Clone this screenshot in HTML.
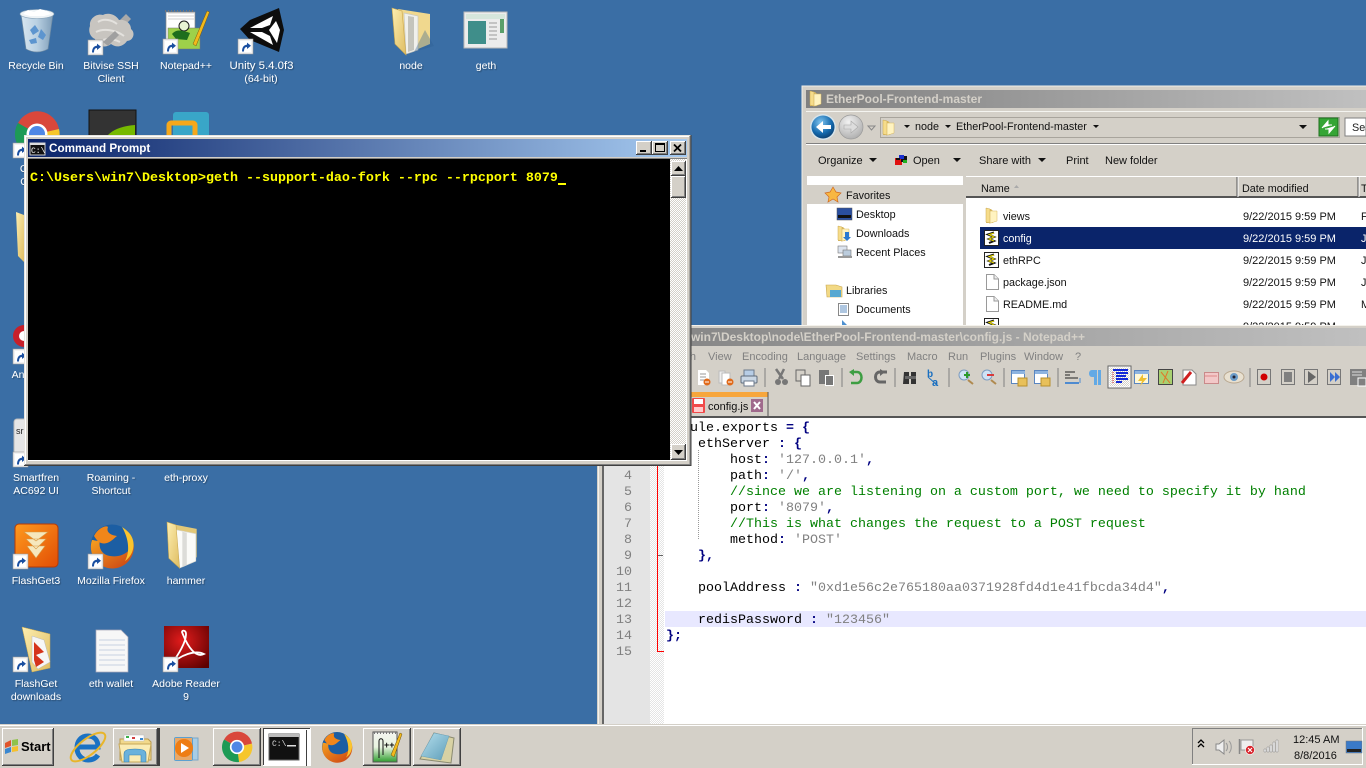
<!DOCTYPE html>
<html><head><meta charset="utf-8"><title>Desktop</title>
<style>
html,body{margin:0;padding:0;background:#3a6ea5;width:1366px;height:768px;overflow:hidden}
svg{display:block;position:absolute;left:0;top:0}
text{font-family:"Liberation Sans",sans-serif;font-size:10.8px;white-space:pre}
.d{fill:#fff;text-anchor:middle;font-size:10.5px;filter:url(#ts)}
.b{font-weight:bold;font-size:12px}
.t{font-size:11px}
.m{font-family:"Liberation Mono",monospace;font-size:13.33px;fill:#000}
.s{fill:#808080}.c{fill:#008000}.o{fill:#000080;font-weight:bold}
.n{font-family:"Liberation Mono",monospace;font-size:13.33px;fill:#808080;text-anchor:end}
.g{fill:#808080;font-size:11px}
</style></head><body>
<svg width="1366" height="768" viewBox="0 0 1366 768" xmlns="http://www.w3.org/2000/svg">
<defs>
<filter id="ts" x="-10%" y="-30%" width="120%" height="170%"><feDropShadow dx="1" dy="1" stdDeviation="0.4" flood-color="#000" flood-opacity=".35"/></filter>
<linearGradient id="act" x1="0" x2="1"><stop offset="0" stop-color="#0a246a"/><stop offset="1" stop-color="#a6caf0"/></linearGradient>
<linearGradient id="ina" x1="0" x2="1"><stop offset="0" stop-color="#808080"/><stop offset="1" stop-color="#c0c0c0"/></linearGradient>
<linearGradient id="fy" x1="0" x2="1" y1="0" y2="1"><stop offset="0" stop-color="#fdeeb0"/><stop offset="1" stop-color="#dfbd62"/></linearGradient>
<linearGradient id="bin" x1="0" x2="1"><stop offset="0" stop-color="#d8e6f0"/><stop offset=".5" stop-color="#b9d0e2"/><stop offset="1" stop-color="#7e9db8"/></linearGradient>
<linearGradient id="fg" x1="0" x2="1" y1="0" y2="1"><stop offset="0" stop-color="#ff9a1e"/><stop offset="1" stop-color="#e14d05"/></linearGradient>
<radialGradient id="ad" cx=".4" cy=".35" r=".8"><stop offset="0" stop-color="#e21c1c"/><stop offset="1" stop-color="#5c0000"/></radialGradient>
<radialGradient id="ba" cx=".4" cy=".3" r=".8"><stop offset="0" stop-color="#7ec4ef"/><stop offset=".6" stop-color="#1469ad"/><stop offset="1" stop-color="#0a3560"/></radialGradient>
<radialGradient id="fw" cx=".4" cy=".3" r=".8"><stop offset="0" stop-color="#f2f2f2"/><stop offset="1" stop-color="#a8a8a8"/></radialGradient>
<linearGradient id="ff" x1="0" x2="1" y1="0" y2="1"><stop offset="0" stop-color="#f5a01f"/><stop offset="1" stop-color="#c93f14"/></linearGradient>
<linearGradient id="gn" x1="0" x2="0" y1="0" y2="1"><stop offset="0" stop-color="#f4f4f0"/><stop offset=".5" stop-color="#e9f4e0"/><stop offset="1" stop-color="#2f9d2f"/></linearGradient>
<linearGradient id="nb" x1="0" x2="1" y1="0" y2="1"><stop offset="0" stop-color="#b7e0ee"/><stop offset="1" stop-color="#5d9db8"/></linearGradient>
<pattern id="chk" width="2" height="2" patternUnits="userSpaceOnUse"><rect width="2" height="2" fill="#e4e4e4"/><rect width="1" height="1" fill="#fff"/><rect x="1" y="1" width="1" height="1" fill="#fff"/></pattern>
<pattern id="chk2" width="2" height="2" patternUnits="userSpaceOnUse"><rect width="2" height="2" fill="#d4d0c8"/><rect width="1" height="1" fill="#fff"/><rect x="1" y="1" width="1" height="1" fill="#fff"/></pattern>

<g id="sc"><rect width="15" height="15" fill="#f2f2f2" stroke="#9a9a9a" stroke-width=".6"/><rect x="2" y="2" width="11" height="11" fill="#fff"/><path d="M4 12.5C4 8 6 6 9 5.6V3.6L13 6.8L9 10V8C7 8 6 9.5 6 12.5Z" fill="#1a4fa0"/></g>
<g id="folder"><path d="M6 1L38 6V36L14 46Z" fill="#f0d88e"/><path d="M12 5L26 8V42L14 46Z" fill="#f0f0ec" stroke="#c8c8c0" stroke-width=".7"/><path d="M16 8L22 9V42L16 44Z" fill="#c4c4bc"/><path d="M0 0L10 3L14 47L3 36Z" fill="url(#fy)" stroke="#c9a74f" stroke-width=".6"/></g>
<g id="folder2"><path d="M5 2L33 7V36L15 44Z" fill="#e2c878"/><path d="M10 8L32 12V40L14 47Z" fill="#fbfbf8" stroke="#d8d8d0" stroke-width=".7"/><path d="M17 10L22 11V44L17 46Z" fill="#dcdcd8"/><path d="M0 0L10 3L14 47L2 37Z" fill="url(#fy)" stroke="#c9a74f" stroke-width=".6"/></g>
<g id="fs"><path d="M1 1H6L8 3V15H1Z" fill="#d9bb66"/><path d="M4 3H12V13L6 15H4Z" fill="#fff3c0" stroke="#d8b85e" stroke-width=".5"/><path d="M1 0L5 1V15L1 14Z" fill="#f6dc8a" stroke="#c9a74f" stroke-width=".5"/></g>
<g id="chrome"><path d="M0 0L-19 -11A22 22 0 0 1 22 -5Z" fill="#d9473b"/><path d="M0 0L22 -5A22 22 0 0 1 3 22Z" fill="#f6c62b"/><path d="M0 0L3 22A22 22 0 0 1 -19 -11Z" fill="#1d9a55"/><circle r="10.500" fill="#fff"/><circle r="8" fill="#4f87e5"/></g>
<g id="fox"><circle r="21.500" fill="#1c5ea3"/><path d="M-20 -6A21.500 21.500 0 1 0 21 -5C20 6 9 12 -2 10C-10 9 -14 2 -12 -6C-14 -4 -17 -6 -20 -6Z" fill="url(#ff)"/><path d="M-18 -10C-14 -18 -6 -21 -4 -19C-6 -14 -2 -11 5 -10C0 -6 -4 -1 -11 -3C-14 -4 -16 -7 -18 -10Z" fill="#f1861a"/><path d="M10 -19C18 -14 22 -8 21.500 0C21 8 16 13 13 15C18 6 17 -7 10 -19Z" fill="#fbc42d"/></g>
<g id="script"><rect x=".5" y=".5" width="14" height="15" fill="#fff" stroke="#222"/><path d="M10 2.500L4 4.500L10 7L5 9L10 11L5 13" fill="none" stroke="#111" stroke-width="2"/><path d="M10 3L5 4.500L10 7L5 9L10 11" fill="none" stroke="#e8d800" stroke-width="1"/></g>
<g id="doc"><path d="M1.500 .5H9L13.500 5V15.500H1.500Z" fill="#fff" stroke="#9a9a9a"/><path d="M9 .5V5H13.500" fill="#eee" stroke="#9a9a9a"/></g>
</defs>

<!-- desktop -->
<rect width="1366" height="768" fill="#3a6ea5"/>

<!-- recycle -->
<path d="M21 14L53 14L48 49Q37 55 26 49Z" fill="url(#bin)" stroke="#6d8aa3" stroke-width=".7"/>
<ellipse cx="37" cy="14" rx="17" ry="4.500" fill="#eef3f6" stroke="#8aa3b8" stroke-width=".6"/>
<path d="M23 14L28 10L34 12L40 9L47 11L51 14L44 16L30 16Z" fill="#fff"/>
<path d="M30 30L35 25L39 31L33 35ZM41 29L46 35L43 40L38 37ZM29 40L36 38L37 43L31 44Z" fill="#5d95cf"/>
<!-- bitvise -->
<path d="M118 22L126 14L131 19L123 27Z" fill="#a9a9a9"/>
<path d="M90 26C89 19 96 13 103 15C109 12 116 15 119 20C125 19 131 23 131 29C136 33 133 41 127 41C123 47 116 48 111 44C105 49 96 46 95 39C90 37 88 31 90 26Z" fill="#c8c5c0"/>
<path d="M98 22C104 18 112 20 117 24M96 32C104 28 116 30 124 36M103 40C109 38 116 40 120 42" stroke="#e4e2de" stroke-width="2" fill="none"/>
<path d="M103 42L115 31L119 35L108 46Z" fill="#a0a0a0"/>
<use href="#sc" x="88" y="40"/>
<!-- notepad++ -->
<rect x="166" y="12" width="29" height="36" fill="#fff" stroke="#888" stroke-width=".7"/>
<path d="M168 13H194M168 16H194M168 19H194" stroke="#d0d0d0"/>
<rect x="168" y="28" width="32" height="21" fill="#9ed14a" stroke="#777" stroke-width=".5"/>
<circle cx="184" cy="26" r="5" fill="#e8f3d4" stroke="#1d1d1d"/><path d="M172 34C177 28 184 31 190 33L187 40L176 39Z" fill="#1d6e1d"/>
<path d="M165 11H195" stroke="#777" stroke-width="2" stroke-dasharray="1 2"/>
<path d="M193 44L207 11L209.500 12L196 46Z" fill="#f2b91b" stroke="#7a5a10" stroke-width=".5"/>
<use href="#sc" x="163" y="39"/>
<!-- unity -->
<path d="M240 29L250 20L279 8L284 30L279 52L250 40Z" fill="#0d0d0d"/>
<path d="M250 28L273 16L270 25L262 28ZM276 21L280 30L277 43L269 30ZM250 32L262 32L270 36L273 45Z" fill="#fff"/>
<use href="#sc" x="238" y="39"/>
<!-- node geth -->
<use href="#folder" transform="translate(392,8)"/>
<path d="M425 30L434 46L414 52Z" fill="#2e5e92" opacity=".35"/>
<rect x="464" y="12" width="43" height="36" fill="#ececec" stroke="#b8b8b8"/><rect x="466" y="14" width="39" height="5" fill="#d6e6dc"/><rect x="468" y="21" width="18" height="23" fill="#3f8e8a"/><path d="M489 23H497M489 27H497M489 31H497M489 35H497M489 39H497" stroke="#9a9a9a"/><rect x="500" y="19" width="4" height="14" fill="#5a9f6a"/>
<text class="d" x="36" y="69">Recycle Bin</text>
<text class="d" x="111" y="69">Bitvise SSH</text><text class="d" x="111" y="82">Client</text>
<text class="d" x="186" y="69">Notepad++</text>
<text class="d" x="261.500" y="69" style="font-size:11.400px">Unity 5.4.0f3</text><text class="d" x="261" y="82">(64-bit)</text>
<text class="d" x="411" y="69">node</text>
<text class="d" x="486" y="69">geth</text>

<!-- row 2 -->
<use href="#chrome" transform="translate(37,134)"/>
<rect x="89" y="110" width="47" height="30" fill="#333" stroke="#111"/><path d="M105 139C110 130 122 126 135 125V139Z" fill="#76b900"/>
<rect x="173" y="112" width="36" height="30" rx="3" fill="#39a6c8"/><rect x="169" y="123" width="26" height="18" rx="2" fill="none" stroke="#f5a81b" stroke-width="5"/>
<use href="#sc" x="13" y="143"/>
<text class="d" x="24" y="172">G</text><text class="d" x="24" y="185">C</text>
<!-- row 3/4 fragments -->
<path d="M16 212L24 215V262L18 256Z" fill="url(#fy)"/>
<circle cx="24" cy="336" r="11" fill="#c8202a"/><circle cx="24" cy="336" r="5" fill="#fff"/>
<use href="#sc" x="13" y="349"/>
<text class="d" x="18" y="378">An</text>
<!-- row 5 -->
<rect x="14" y="419" width="14" height="40" rx="3" fill="#e6e6e6" stroke="#bbb"/><text x="16" y="434" style="font-size:9px" fill="#222">sr</text>
<use href="#sc" x="13" y="452"/>
<text class="d" x="36" y="481">Smartfren</text><text class="d" x="36" y="494">AC692 UI</text>
<text class="d" x="111" y="481">Roaming -</text><text class="d" x="111" y="494">Shortcut</text>
<text class="d" x="186" y="481">eth-proxy</text>
<!-- row 6 -->
<rect x="15" y="524" width="43" height="43" rx="4" fill="url(#fg)" stroke="#b53a05"/>
<path d="M24 532H48L36 541ZM26 539H46L36 549ZM27 546H45L36 558Z" fill="#f6e7bd" stroke="#d89a44" stroke-width=".6"/>
<use href="#sc" x="13" y="554"/>
<use href="#fox" transform="translate(112,546)"/>
<use href="#sc" x="88" y="554"/>
<use href="#folder2" transform="translate(167,522) scale(.9,.98)"/>
<text class="d" x="36" y="584">FlashGet3</text><text class="d" x="111" y="584">Mozilla Firefox</text><text class="d" x="186" y="584">hammer</text>
<!-- row 7 -->
<path d="M22 627L50 634V668L32 672Z" fill="url(#fy)" stroke="#c9a74f" stroke-width=".5"/>
<path d="M32 636L44 640L50 662L38 669L32 662Z" fill="#f6f6f6" stroke="#bbb" stroke-width=".5"/>
<path d="M34 642L44 652L36 655L44 662L36 667L34 660Z" fill="#d5341c"/>
<use href="#sc" x="13" y="657"/>
<path d="M96 630H121L128 637V672H96Z" fill="#f7f7f7" stroke="#aab" stroke-width=".7"/>
<path d="M99 640H125M99 645H125M99 650H125M99 655H125M99 660H125M99 665H125" stroke="#c7d0e0"/>
<rect x="164" y="626" width="45" height="42" fill="url(#ad)"/>
<path d="M182 632C188 648 196 658 204 654C196 650 180 654 170 666C176 658 186 644 186 634C186 630 182 630 182 632Z" fill="none" stroke="#fff" stroke-width="1.800"/>
<use href="#sc" x="163" y="657"/>
<text class="d" x="36" y="687">FlashGet</text><text class="d" x="36" y="700">downloads</text>
<text class="d" x="111" y="687">eth wallet</text>
<text class="d" x="186" y="687">Adobe Reader</text><text class="d" x="186" y="700">9</text>

<!-- EXPLORER -->
<rect x="802" y="86" width="564" height="245" fill="#d4d0c8"/>
<path d="M802 330V86H1366" fill="none" stroke="#f0eee8" stroke-width="1"/>
<rect x="806" y="90" width="560" height="18" fill="url(#ina)"/>
<use href="#fs" transform="translate(809,91)"/>
<text class="b" x="826" y="103" fill="#d4d0c8">EtherPool-Frontend-master</text>
<rect x="806" y="111" width="560" height="1" fill="#f4f4f0"/>
<rect x="806" y="143" width="560" height="1" fill="#808080"/><rect x="806" y="144" width="560" height="1" fill="#fff"/>
<circle cx="823" cy="127" r="13" fill="#d8e4ea"/><circle cx="823" cy="127" r="11.500" fill="url(#ba)"/><path d="M816 127L823 121V125H831V129H823V133Z" fill="#fff"/>
<circle cx="851" cy="127" r="12" fill="url(#fw)" stroke="#9a9a9a" stroke-width=".7"/><path d="M858 127L851 121V125H844V129H851V133Z" fill="#ddd" stroke="#a8a8a8" stroke-width=".6"/>
<path d="M868 126H875L871.500 130Z" fill="none" stroke="#888"/>
<rect x="880.500" y="117.500" width="459" height="20" fill="#d4d0c8" stroke="#a8a49c"/>
<use href="#fs" transform="translate(882,120)"/>
<path d="M904 125H910L907 128Z M945 125H951L948 128Z M1093 125H1099L1096 128Z M1299 125H1307L1303 129Z" fill="#111"/>
<text x="915" y="130" fill="#111">node</text><text x="956" y="130" fill="#111">EtherPool-Frontend-master</text>
<rect x="1319" y="118" width="19" height="18" fill="#35a535" stroke="#1e6e1e"/><path d="M1322 128L1328 121V125H1332M1335 126L1329 133V129H1325" fill="#fff" stroke="#fff" stroke-width="1"/>
<rect x="1345" y="118" width="21" height="18" fill="#fff" stroke="#808080"/><text x="1352" y="131" fill="#222">Sea</text>
<text class="t" x="818" y="164" fill="#111">Organize</text><path d="M869 158H877L873 162Z M953 158H961L957 162Z M1038 158H1046L1042 162Z" fill="#111"/>
<rect x="895" y="158" width="7" height="7" fill="#e01010"/><rect x="901" y="156" width="6" height="6" fill="#111"/><rect x="899" y="155" width="5" height="4" fill="#1a2fd0"/><rect x="896" y="158" width="4" height="2" fill="#111"/><rect x="903" y="160" width="4" height="3" fill="#20b020"/>
<text class="t" x="913" y="164" fill="#111">Open</text><text class="t" x="979" y="164" fill="#111">Share with</text><text class="t" x="1066" y="164" fill="#111">Print</text><text class="t" x="1105" y="164" fill="#111">New folder</text>
<rect x="807" y="176" width="156" height="155" fill="#fff"/>
<rect x="807" y="185" width="156" height="19" fill="#d4d0c8"/>
<path d="M833 187L836 192L841 193L837 197L838 202L833 199L828 202L829 197L825 193L830 192Z" fill="#f8b742" stroke="#d06a20" stroke-width=".7"/>
<text x="846" y="199" fill="#111">Favorites</text>
<rect x="837" y="208" width="15" height="12" fill="#2a4fa0" stroke="#555" stroke-width=".5"/><rect x="838" y="215" width="13" height="3" fill="#111"/>
<text x="856" y="218" fill="#111">Desktop</text>
<use href="#fs" transform="translate(837,226)"/><path d="M845 232H849V237H851L847 241L843 237H845Z" fill="#2b7ad1"/>
<text x="856" y="237" fill="#111">Downloads</text>
<rect x="838" y="246" width="9" height="7" fill="#dce4ef" stroke="#777" stroke-width=".6"/><rect x="843" y="250" width="8" height="6" fill="#bcd" stroke="#777" stroke-width=".6"/><rect x="838" y="256" width="14" height="2" fill="#999"/>
<text x="856" y="256" fill="#111">Recent Places</text>
<path d="M826 285H836L842 287V297H827Z" fill="#f2d985" stroke="#c9a74f" stroke-width=".6"/><rect x="830" y="290" width="11" height="7" fill="#57a8d2"/>
<text x="846" y="294" fill="#111">Libraries</text>
<rect x="838.500" y="303.500" width="10" height="12" fill="#fff" stroke="#888"/><path d="M840 306H847M840 308H847M840 310H847M840 312H847" stroke="#5d8cc0"/>
<text x="856" y="313" fill="#111">Documents</text>
<path d="M842 320L848 326H842Z" fill="#4d90d0"/>
<rect x="963" y="176" width="3" height="155" fill="#d4d0c8"/>
<rect x="966" y="176" width="400" height="155" fill="#fff"/>
<rect x="966" y="176" width="400" height="21" fill="#d4d0c8"/>
<rect x="966" y="176" width="400" height="1" fill="#fff"/><rect x="966" y="196" width="400" height="2" fill="#555"/>
<path d="M1237 177V197M1358 177V197" stroke="#555"/><path d="M1238 177V197M1359 177V197" stroke="#fff"/>
<text x="981" y="192" fill="#111">Name</text><path d="M1014 188H1019L1016.500 185Z" fill="#aaa"/>
<text x="1242" y="192" fill="#111">Date modified</text><text x="1361" y="192" fill="#111">T</text>
<rect x="980" y="227" width="386" height="22" fill="#0a246a"/>
<use href="#fs" transform="translate(985,208)"/><text x="1003" y="220" fill="#111">views</text>
<use href="#script" transform="translate(984,230)"/><text x="1003" y="242" fill="#fff">config</text>
<use href="#script" transform="translate(984,252)"/><text x="1003" y="264" fill="#111">ethRPC</text>
<use href="#doc" transform="translate(985,274)"/><text x="1003" y="286" fill="#111">package.json</text>
<use href="#doc" transform="translate(985,296)"/><text x="1003" y="308" fill="#111">README.md</text>
<use href="#script" transform="translate(984,318)"/>
<g fill="#111">
<text class="t" x="1243" y="220">9/22/2015 9:59 PM</text><text class="t" x="1243" y="242" fill="#fff">9/22/2015 9:59 PM</text><text class="t" x="1243" y="264">9/22/2015 9:59 PM</text><text class="t" x="1243" y="286">9/22/2015 9:59 PM</text><text class="t" x="1243" y="308">9/22/2015 9:59 PM</text><text class="t" x="1243" y="330">9/22/2015 9:59 PM</text>
<text x="1361" y="220">F</text><text x="1361" y="242" fill="#fff">J</text><text x="1361" y="264">J</text><text x="1361" y="286">J</text><text x="1361" y="308">M</text></g>

<!-- NOTEPAD++ -->
<rect x="597" y="325" width="769" height="400" fill="#d4d0c8"/>
<rect x="597" y="325" width="769" height="1" fill="#f4f2ec"/>
<rect x="598" y="326" width="1" height="399" fill="#f4f2ec"/>
<rect x="600" y="328" width="766" height="18" fill="url(#ina)"/>
<text class="b" x="1085" y="341" text-anchor="end" fill="#d4d0c8">C:\Users\win7\Desktop\node\EtherPool-Frontend-master\config.js - Notepad++</text>
<text class="g" x="696" y="360" text-anchor="end">Search</text><text class="g" x="708" y="360">View</text><text class="g" x="742" y="360">Encoding</text><text class="g" x="797" y="360">Language</text><text class="g" x="856" y="360">Settings</text><text class="g" x="907" y="360">Macro</text><text class="g" x="948" y="360">Run</text><text class="g" x="980" y="360">Plugins</text><text class="g" x="1024" y="360">Window</text><text class="g" x="1075" y="360">?</text>
<!-- toolbar -->
<g stroke="#808080"><path d="M765 368V387M842 368V387M895 368V387M949 368V387M1004 368V387M1058 368V387M1250 368V387"/></g>
<g>
<path d="M698 370H706L709 373V385H698Z" fill="#fff"/><path d="M700 374H706M700 377H706M700 380H705" stroke="#999"/><circle cx="707" cy="382" r="3.500" fill="#e06a1a"/><rect x="705" y="381.500" width="4" height="1" fill="#fff"/>
<path d="M719 371H725V383H719Z" fill="#eee" stroke="#bbb"/><path d="M722 373H730V385H722Z" fill="#fff" stroke="#bbb"/><circle cx="730" cy="382" r="3.500" fill="#e06a1a"/><rect x="728" y="381.500" width="4" height="1" fill="#fff"/>
<rect x="744" y="370" width="10" height="7" fill="#b7cde6" stroke="#6c7a8c"/><rect x="741" y="376" width="16" height="7" rx="1" fill="#c9d6e4" stroke="#5f6c7c"/><rect x="744" y="381" width="10" height="5" fill="#fff" stroke="#6c7a8c"/>
<path d="M784 369L779 379M776 369L783 379" stroke="#777" stroke-width="2.500"/><circle cx="778" cy="382" r="3" fill="#777"/><circle cx="785" cy="382" r="3" fill="#777"/>
<rect x="796" y="370" width="9" height="11" fill="#d4d0c8" stroke="#666"/><rect x="801" y="375" width="9" height="11" fill="#fff" stroke="#666"/>
<rect x="819" y="370" width="10" height="14" fill="#777"/><rect x="825" y="375" width="9" height="11" fill="#fff"/><rect x="826" y="376" width="7" height="9" fill="#777"/>
<path d="M851 372H857C863 372 863 383 857 383H851" fill="none" stroke="#3d9e42" stroke-width="2.500"/><path d="M854 369V376L849 372Z" fill="#3d9e42"/>
<path d="M887 372H880C874 372 874 382 880 382H886" fill="none" stroke="#666" stroke-width="3"/><path d="M880 369V376L885 372Z" fill="#666"/>
<path d="M904 372H909V384H903ZM911 372H916V384H911Z" fill="#333"/><rect x="905" y="376" width="11" height="3" fill="#666"/>
<text x="927" y="377" style="font-size:10px;font-weight:bold" fill="#1a6fc0">b</text><text x="932" y="386" style="font-size:11px;font-weight:bold" fill="#1a6fc0">a</text><path d="M928 377L937 385" stroke="#1a6fc0"/>
<circle cx="964" cy="375" r="5" fill="#cfe2f5" stroke="#7d9cc0"/><path d="M968 380L973 384" stroke="#b08a50" stroke-width="2"/><path d="M967 372V378M964 375H970" stroke="#2c9a2c" stroke-width="2"/>
<circle cx="987" cy="375" r="5" fill="#cfe2f5" stroke="#7d9cc0"/><path d="M991 380L996 384" stroke="#b08a50" stroke-width="2"/><path d="M987 375H994" stroke="#d83a3a" stroke-width="2"/>
<rect x="1011.500" y="370.500" width="13" height="13" fill="#fff" stroke="#5a86c0"/><rect x="1012" y="371" width="13" height="3" fill="#8eb4e0"/><rect x="1018" y="378" width="9" height="8" fill="#e8c05a" stroke="#b8912e"/>
<rect x="1034.500" y="370.500" width="13" height="13" fill="#fff" stroke="#5a86c0"/><rect x="1035" y="371" width="13" height="3" fill="#8eb4e0"/><rect x="1041" y="378" width="9" height="8" fill="#e8c05a" stroke="#b8912e"/>
<path d="M1065 372H1075M1065 375H1070M1065 378H1078" stroke="#222"/><path d="M1065 383H1079" stroke="#4f8bd0" stroke-width="2"/><path d="M1080 378V383" stroke="#4f8bd0"/>
<path d="M1101 370H1092C1088 370 1088 377 1092 377H1094V385H1097V370ZM1098 370H1101V385H1098Z" fill="#62a9e5"/>
<rect x="1108" y="366" width="23" height="22" fill="url(#chk2)" stroke="#666"/><rect x="1109" y="367" width="21" height="20" fill="url(#chk2)" stroke="#fff"/>
<path d="M1113 370H1128M1116 373H1128M1116 376H1126M1116 379H1128M1116 382H1122" stroke="#1228d8" stroke-width="2"/><path d="M1113 372V384" stroke="#d02020" stroke-dasharray="1 1"/>
<rect x="1134.500" y="370.500" width="14" height="13" fill="#fff8d8" stroke="#5a86c0"/><rect x="1135" y="371" width="14" height="3" fill="#8eb4e0"/><path d="M1143 374L1138 381H1142L1140 386L1147 378H1143Z" fill="#f0c030"/>
<rect x="1158.500" y="369.500" width="14" height="15" fill="#a8d070" stroke="#444"/><path d="M1161 372L1170 383M1168 371L1163 383" stroke="#e0782a"/>
<path d="M1183 370H1192L1196 374V385H1183Z" fill="#fff" stroke="#888"/><path d="M1182 383L1191 372" stroke="#d02020" stroke-width="3"/>
<rect x="1204.500" y="372.500" width="14" height="11" fill="#f2c8c8" stroke="#c98a8a"/><rect x="1205" y="375" width="12" height="2" fill="#e8a8a8"/>
<ellipse cx="1234" cy="377" rx="10" ry="6" fill="#e8e0d0" stroke="#b9a890"/><circle cx="1234" cy="377" r="4" fill="#6c9cc8"/><circle cx="1234" cy="377" r="1.500" fill="#223"/>
<rect x="1257.500" y="369.500" width="13" height="15" fill="#d4d0c8" stroke="#777"/><circle cx="1264" cy="377" r="3.500" fill="#d00000"/>
<rect x="1281.500" y="369.500" width="13" height="15" fill="#d4d0c8" stroke="#777"/><rect x="1284" y="372" width="8" height="10" fill="#808080"/>
<rect x="1304.500" y="369.500" width="13" height="15" fill="#d4d0c8" stroke="#777"/><path d="M1308 371V383L1316 377Z" fill="#666"/>
<rect x="1327.500" y="369.500" width="13" height="15" fill="#d4d0c8" stroke="#777"/><path d="M1330 372V382L1335 377ZM1335 372V382L1340 377Z" fill="#3b6fd2"/>
<rect x="1350" y="369" width="16" height="16" fill="#808080"/><path d="M1352 372H1362M1352 375H1362" stroke="#ddd"/><rect x="1358" y="378" width="8" height="8" fill="#808080" stroke="#fff"/>
</g>
<!-- tabs -->
<rect x="600" y="392" width="168" height="24" fill="#d4d0c8"/>
<rect x="691" y="392" width="77" height="5" fill="#f7a63c"/>
<path d="M768 392V416" stroke="#555"/>
<rect x="692" y="398" width="13" height="15" rx="1" fill="#f04a4a"/><rect x="694" y="399" width="9" height="5" fill="#fff"/><rect x="694" y="407" width="9" height="5" fill="#fcc"/>
<text class="t" x="708" y="410" fill="#111">config.js</text>
<rect x="751" y="399" width="12" height="13" fill="#a06a8c"/><path d="M754 402L760 409M760 402L754 409" stroke="#fff" stroke-width="2"/>
<rect x="600" y="416" width="766" height="2" fill="#555"/>
<!-- editor -->
<rect x="602" y="418" width="764" height="307" fill="#fff"/>
<rect x="602" y="418" width="2" height="307" fill="#666"/>
<rect x="604" y="418" width="46" height="307" fill="#e4e4e4"/>
<rect x="650" y="418" width="14" height="307" fill="url(#chk)"/>
<rect x="665" y="611" width="701" height="16" fill="#e8e8ff"/>
<rect x="657" y="418" width="1" height="233" fill="#f00"/><rect x="657" y="651" width="7" height="1" fill="#f00"/>
<rect x="658" y="555" width="5" height="1" fill="#666"/>
<path d="M698.500 450V540" stroke="#999" stroke-dasharray="1 1"/>
<g>
<text class="n" x="632" y="479">4</text><text class="n" x="632" y="495">5</text><text class="n" x="632" y="511">6</text><text class="n" x="632" y="527">7</text><text class="n" x="632" y="543">8</text><text class="n" x="632" y="559">9</text><text class="n" x="632" y="575">10</text><text class="n" x="632" y="591">11</text><text class="n" x="632" y="607">12</text><text class="n" x="632" y="623">13</text><text class="n" x="632" y="639">14</text><text class="n" x="632" y="655">15</text>
<text class="m" x="666" y="431">module.exports <tspan class="o">=</tspan> <tspan class="o">{</tspan></text>
<text class="m" x="666" y="447">    ethServer <tspan class="o">:</tspan> <tspan class="o">{</tspan></text>
<text class="m" x="666" y="463">        host<tspan class="o">:</tspan> <tspan class="s">'127.0.0.1'</tspan><tspan class="o">,</tspan></text>
<text class="m" x="666" y="479">        path<tspan class="o">:</tspan> <tspan class="s">'/'</tspan><tspan class="o">,</tspan></text>
<text class="m c" x="666" y="495">        //since we are listening on a custom port, we need to specify it by hand</text>
<text class="m" x="666" y="511">        port<tspan class="o">:</tspan> <tspan class="s">'8079'</tspan><tspan class="o">,</tspan></text>
<text class="m c" x="666" y="527">        //This is what changes the request to a POST request</text>
<text class="m" x="666" y="543">        method<tspan class="o">:</tspan> <tspan class="s">'POST'</tspan></text>
<text class="m o" x="666" y="559">    },</text>
<text class="m" x="666" y="591">    poolAddress <tspan class="o">:</tspan> <tspan class="s">"0xd1e56c2e765180aa0371928fd4d1e41fbcda34d4"</tspan><tspan class="o">,</tspan></text>
<text class="m" x="666" y="623">    redisPassword <tspan class="o">:</tspan> <tspan class="s">"123456"</tspan></text>
<text class="m o" x="666" y="639">};</text>
</g>

<!-- CMD -->
<rect x="24" y="135" width="667" height="331" fill="#d4d0c8"/>
<path d="M24.500 465V135.500H690" fill="none" stroke="#e8e6e0"/><path d="M25.500 464V136.500H689" fill="none" stroke="#fff"/>
<path d="M24 465.500H691V135" fill="none" stroke="#404040"/><path d="M25 464.500H690V136" fill="none" stroke="#808080"/>
<rect x="28" y="139" width="659" height="18" fill="url(#act)"/>
<rect x="30" y="143" width="15" height="12" fill="#111" stroke="#ccc"/><rect x="30" y="143" width="15" height="2" fill="#ddd"/><text x="31" y="153" style="font-size:8px;font-family:'Liberation Mono',monospace" fill="#fff">C:\</text>
<text class="b" x="49" y="152" fill="#fff" style="font-size:11.700px">Command Prompt</text>
<g>
<rect x="636" y="141" width="16" height="14" fill="#404040"/><rect x="636" y="141" width="15" height="13" fill="#fff"/><rect x="637" y="142" width="14" height="12" fill="#808080"/><rect x="637" y="142" width="13" height="11" fill="#d4d0c8"/><rect x="640" y="150" width="6" height="2" fill="#000"/>
<rect x="652" y="141" width="16" height="14" fill="#404040"/><rect x="652" y="141" width="15" height="13" fill="#fff"/><rect x="653" y="142" width="14" height="12" fill="#808080"/><rect x="653" y="142" width="13" height="11" fill="#d4d0c8"/><rect x="655.500" y="143.500" width="9" height="8" fill="none" stroke="#000"/><rect x="655" y="143" width="10" height="2" fill="#000"/>
<rect x="670" y="141" width="16" height="14" fill="#404040"/><rect x="670" y="141" width="15" height="13" fill="#fff"/><rect x="671" y="142" width="14" height="12" fill="#808080"/><rect x="671" y="142" width="13" height="11" fill="#d4d0c8"/><path d="M674 144.500L681 151.500M681 144.500L674 151.500" stroke="#000" stroke-width="1.800"/>
</g>
<rect x="28" y="159" width="642" height="301" fill="#000"/>
<rect x="28" y="158" width="659" height="1" fill="#808080"/>
<rect x="670" y="159" width="17" height="301" fill="url(#chk2)"/>
<rect x="686" y="159" width="1" height="302" fill="#fff"/>
<rect x="28" y="460" width="659" height="1" fill="#fff"/>
<g>
<rect x="671" y="161" width="15" height="15" fill="#404040"/><rect x="671" y="161" width="14" height="14" fill="#fff"/><rect x="672" y="162" width="13" height="13" fill="#808080"/><rect x="672" y="162" width="12" height="12" fill="#d4d0c8"/><path d="M674 171H683L678.500 166Z" fill="#000"/>
<rect x="671" y="176" width="15" height="22" fill="#404040"/><rect x="671" y="176" width="14" height="21" fill="#fff"/><rect x="672" y="177" width="13" height="20" fill="#808080"/><rect x="672" y="177" width="12" height="19" fill="#d4d0c8"/>
<rect x="671" y="444" width="15" height="16" fill="#404040"/><rect x="671" y="444" width="14" height="15" fill="#fff"/><rect x="672" y="445" width="13" height="14" fill="#808080"/><rect x="672" y="445" width="12" height="13" fill="#d4d0c8"/><path d="M674 450H683L678.500 455Z" fill="#000"/>
</g>
<text x="30" y="181" style="font-family:'Liberation Mono',monospace;font-size:13.33px;font-weight:bold" fill="#ffff00">C:\Users\win7\Desktop&gt;geth --support-dao-fork --rpc --rpcport 8079</text>
<rect x="558" y="183" width="8" height="2" fill="#ffff00"/>

<!-- TASKBAR -->
<rect x="0" y="724" width="1366" height="44" fill="#d4d0c8"/>
<rect x="0" y="725" width="1366" height="1" fill="#fff"/>
<g>
<rect x="2" y="728" width="52" height="38" fill="#404040"/><rect x="2" y="728" width="51" height="37" fill="#fff"/><rect x="3" y="729" width="50" height="36" fill="#808080"/><rect x="3" y="729" width="49" height="35" fill="#d4d0c8"/>
<rect x="113" y="728" width="45" height="38" fill="#404040"/><rect x="113" y="728" width="44" height="37" fill="#fff"/><rect x="114" y="729" width="43" height="36" fill="#808080"/><rect x="114" y="729" width="42" height="35" fill="#d4d0c8"/><rect x="158" y="728" width="2" height="38" fill="#404040"/>
<rect x="213" y="728" width="48" height="38" fill="#404040"/><rect x="213" y="728" width="47" height="37" fill="#fff"/><rect x="214" y="729" width="46" height="36" fill="#808080"/><rect x="214" y="729" width="45" height="35" fill="#d4d0c8"/>
<rect x="263" y="728" width="48" height="38" fill="#fff"/><rect x="263" y="728" width="47" height="37" fill="#404040"/><rect x="264" y="729" width="46" height="36" fill="#fff"/><rect x="306" y="730" width="1" height="36" fill="#404040"/>
<rect x="363" y="728" width="48" height="38" fill="#404040"/><rect x="363" y="728" width="47" height="37" fill="#fff"/><rect x="364" y="729" width="46" height="36" fill="#808080"/><rect x="364" y="729" width="45" height="35" fill="#d4d0c8"/>
<rect x="413" y="728" width="48" height="38" fill="#404040"/><rect x="413" y="728" width="47" height="37" fill="#fff"/><rect x="414" y="729" width="46" height="36" fill="#808080"/><rect x="414" y="729" width="45" height="35" fill="#d4d0c8"/>
</g>
<!-- start -->
<path d="M5 743L11 740V746L5 748Z" fill="#e0552c"/><path d="M12 740L18 739V745L12 746Z" fill="#8fc24a"/><path d="M5 749L11 747V752L5 754Z" fill="#3a87d0"/><path d="M12 747L18 746V751L12 752Z" fill="#f5c02c"/>
<text x="21" y="751" style="font-size:13px;font-weight:bold" fill="#000">Start</text>
<!-- IE -->
<path d="M79 747H98C98 740 94 736 88 736C81 736 77 741 77 748C77 755 82 760 88 760C93 760 96 758 98 755" fill="none" stroke="#1a72c4" stroke-width="5"/>
<ellipse cx="88" cy="747" rx="21" ry="8" transform="rotate(-38 88 747)" fill="none" stroke="#e8b52a" stroke-width="2"/>
<!-- explorer btn -->
<path d="M120 739H148L151 742V760H120Z" fill="#f2d98c" stroke="#b89a50"/><rect x="124" y="735" width="20" height="6" fill="#fff" stroke="#bbb" stroke-width=".5"/><rect x="126" y="736" width="3" height="2" fill="#3cb04a"/><rect x="132" y="737" width="3" height="2" fill="#d04040"/><rect x="140" y="738" width="3" height="2" fill="#3a88d0"/>
<path d="M119 744H151L148 762H122Z" fill="#fbecb4" stroke="#c7a858"/><path d="M124 762V754C124 750 128 749 135 749C142 749 146 750 146 754V762H141V755H129V762Z" fill="#6ab2dc" stroke="#3a82b0" stroke-width=".6"/>
<!-- wmp -->
<rect x="188" y="738" width="10" height="22" fill="#a7cde6" stroke="#7ba6c6"/><rect x="174" y="737" width="19" height="24" rx="2" fill="#5ca0d0"/><rect x="175" y="738" width="17" height="22" fill="#e8a868"/><circle cx="184" cy="748" r="9" fill="#ee7d14"/><path d="M181 743V753L189 748Z" fill="#fff"/>
<!-- chrome -->
<use href="#chrome" transform="translate(237,747) scale(.68)"/>
<!-- cmd -->
<rect x="269" y="734" width="30" height="26" fill="#111" stroke="#666"/><rect x="269" y="734" width="30" height="3" fill="#bbb"/><text x="272" y="746" style="font-family:'Liberation Mono',monospace;font-size:8px" fill="#ddd">C:\</text><rect x="287" y="745" width="9" height="1.500" fill="#ddd"/>
<!-- firefox -->
<use href="#fox" transform="translate(337,747) scale(.7)"/>
<!-- npp -->
<rect x="373" y="732" width="24" height="30" fill="url(#gn)" stroke="#555"/><path d="M374 733H396" stroke="#777" stroke-width="2" stroke-dasharray="1 2"/>
<path d="M379 741V758M379 741C379 738 383 738 383 741V755" fill="none" stroke="#111"/><text x="384" y="748" style="font-size:9px;font-weight:bold" fill="#111">++</text>
<path d="M391 755L400 733L402 734L394 757Z" fill="#f2b91b" stroke="#6a4d0a" stroke-width=".5"/>
<!-- notepad -->
<path d="M420 759L434 733L454 738L451 763Z" fill="#d8d2a4" stroke="#8a8a70"/><path d="M421 756L434 733L449 736L441 760Z" fill="url(#nb)" stroke="#6ba0b6" stroke-width=".5"/>
<!-- tray -->
<rect x="1192" y="728" width="171" height="37" fill="#fff"/><rect x="1192" y="728" width="170" height="36" fill="#808080"/><rect x="1193" y="729" width="169" height="35" fill="#d4d0c8"/>
<path d="M1198 743L1201 740L1204 743M1198 747L1201 744L1204 747" fill="none" stroke="#000" stroke-width="1.300"/>
<path d="M1216 744H1219L1224 740V754L1219 750H1216Z" fill="#eee" stroke="#888"/><path d="M1226 743C1228 745 1228 749 1226 751M1229 741C1232 744 1232 750 1229 753" fill="none" stroke="#999"/>
<path d="M1239.500 739V754" stroke="#888" stroke-width="1.500"/><path d="M1241 740H1253V750H1241Z" fill="#eee" stroke="#999"/><circle cx="1250" cy="750" r="4.500" fill="#d8242c" stroke="#fff" stroke-width=".6"/><path d="M1248 748L1252 752M1252 748L1248 752" stroke="#fff" stroke-width="1.100"/>
<path d="M1264 749H1266V752H1264ZM1267 747H1269V752H1267ZM1270 745H1272V752H1270ZM1273 742H1275V752H1273ZM1276 740H1278V752H1276Z" fill="#f2f2f2" stroke="#888" stroke-width=".5"/>
<text class="t" x="1293" y="743" fill="#111">12:45 AM</text><text class="t" x="1294" y="759" fill="#111">8/8/2016</text>
<rect x="1346" y="741" width="16" height="12" fill="#3a7ac8" stroke="#777" stroke-width=".5"/><rect x="1347" y="749" width="14" height="3" fill="#222"/>
</svg>
</body></html>
